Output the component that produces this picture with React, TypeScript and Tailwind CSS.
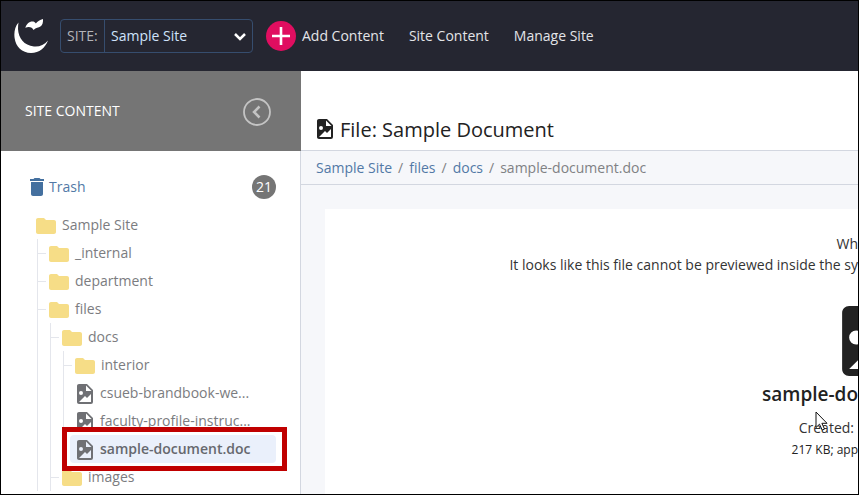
import type { ReactNode } from "react";

const navLinks = ["Site Content", "Manage Site"];

const crumbs = ["Sample Site", "files", "docs"];

function FileIcon({ className, viewBox = "4 2 16 20" }: { className?: string; viewBox?: string }) {
  return (
    <svg viewBox={viewBox} className={className} fill="currentColor" aria-hidden="true">
      <path d="M13,9H18.5L13,3.5V9M6,2H14L20,8V20A2,2 0 0,1 18,22H6C4.89,22 4,21.1 4,20V4C4,2.89 4.89,2 6,2M6,20H15L18,20V12L14,16L12,14L6,20M8,9A2,2 0 0,0 6,11A2,2 0 0,0 8,13A2,2 0 0,0 10,11A2,2 0 0,0 8,9Z" />
    </svg>
  );
}

function FolderIcon() {
  return (
    <svg viewBox="2 4 20 16" className="mt-px h-4 w-5 shrink-0 text-[#f6dd87]" fill="currentColor" aria-hidden="true">
      <path d="M10 4H4c-1.1 0-2 .9-2 2v12c0 1.1.9 2 2 2h16c1.1 0 2-.9 2-2V8c0-1.1-.9-2-2-2h-8l-2-2z" />
    </svg>
  );
}

function Logo() {
  return (
    <svg viewBox="0 0 34 34" className="h-[34px] w-[34px] shrink-0" fill="#fff" aria-hidden="true">
      <path d="M4.500 3.500C1 7.500-.2 13 .6 19c1 8.500 7.500 15 16.400 15 8.500 0 14-5 17-12.500-4 4.500-8.500 6.500-14 6C10 26.500 4.500 19 4 10c0-2.500.2-4.500.5-6.500z" />
      <path d="M11.300 8.700c1.200-4 4.200-6.700 8-6.200 1 .2 1.900.9 2.500 1.900C23.500 2.400 26 .8 29 0c.2 3.200-.4 6-2.600 7.600-1.900 1.200-4.400 1-6.900 3.400-1.200-2.600-4-3.700-8.200-2.300z" />
    </svg>
  );
}

// A folder row; its children hang off a vertical guide line
function Folder({ name, root, children }: { name: string; root?: boolean; children?: ReactNode }) {
  return (
    <li>
      <a href="#" className="flex h-7 items-center">
        {!root && <span className="mr-[3px] h-px w-2 bg-[#e4e6ec]" />}
        <FolderIcon />
        <span className="ml-[6px]">{name}</span>
      </a>
      {children && (
        <ul className={root ? "ml-px border-l border-[#e4e6ec]" : "ml-3 border-l border-[#e4e6ec]"}>
          {children}
        </ul>
      )}
    </li>
  );
}

function File({ name, selected }: { name: string; selected?: boolean }) {
  return (
    <li className="relative">
      <a
        href="#"
        className={
          selected
            ? "ml-[6px] mr-6 flex h-7 items-center rounded bg-[#eaf0fb] pl-[7px] font-semibold text-[#66686e]"
            : "ml-[6px] mr-6 flex h-7 items-center pl-[7px]"
        }
      >
        <FileIcon className="mt-[2px] h-5 w-4 shrink-0 text-[#6f7074]" />
        <span className="ml-[7px] whitespace-nowrap">{name}</span>
      </a>
      {selected && (
        <span className="pointer-events-none absolute -left-[2px] -top-2 right-[13px] z-10 h-11 border-[5px] border-[#c00000]" />
      )}
    </li>
  );
}

function Header() {
  return (
    <header className="flex h-[70px] shrink-0 items-center bg-[#252631] pl-[13px] text-sm text-[#e3e4e8]">
      <Logo />
      <div className="ml-3 flex h-[34px] w-[193px] items-center rounded-sm border border-[#364d6e]">
        <label htmlFor="site" className="flex h-full w-11 shrink-0 items-center border-r border-[#364d6e] pl-[6px] text-[#b4b4b8]">
          SITE:
        </label>
        <div className="relative flex-1">
          <select id="site" className="w-full appearance-none bg-transparent pl-[6px] text-[#cfe3fb] outline-none">
            <option>Sample Site</option>
          </select>
          <svg viewBox="0 0 12 8" className="pointer-events-none absolute right-[6px] top-[7px] h-2 w-3" fill="none" stroke="#fff" strokeWidth="2.500" aria-hidden="true">
            <path d="M1 1l5 5 5-5" />
          </svg>
        </div>
      </div>
      <nav className="flex items-center">
        <a href="#" className="ml-[13px] flex items-center">
          <svg viewBox="0 0 30 30" className="mr-[6px] h-[30px] w-[30px]" aria-hidden="true">
            <circle cx="15" cy="15" r="15" fill="#e00e60" />
            <path d="M6 15h18M15 6v18" stroke="#fff" strokeWidth="2.600" />
          </svg>
          Add Content
        </a>
        {navLinks.map((link) => (
          <a key={link} href="#" className="ml-[25px]">
            {link}
          </a>
        ))}
      </nav>
    </header>
  );
}

function Sidebar() {
  return (
    <aside className="flex w-[300px] shrink-0 flex-col">
      <div className="flex h-20 items-center justify-between bg-[#757575] pl-6 pr-[30px]">
        <h2 className="text-sm text-white">SITE CONTENT</h2>
        <button type="button" aria-label="Collapse" className="text-[#c4c4c4]">
          <svg viewBox="0 0 28 28" className="mt-[2px] h-7 w-7" fill="none" stroke="currentColor" aria-hidden="true">
            <circle cx="14" cy="14" r="13" strokeWidth="1.800" />
            <path d="M16.500 8.500L11 14l5.500 5.500" strokeWidth="2.500" />
          </svg>
        </button>
      </div>
      <div className="flex-1 border-r border-[#d3d7e0] text-sm text-[#7b7c80]">
        <div className="flex items-center justify-between pl-[29px] pr-6 pt-6">
          <a href="#" className="flex items-center text-[#5279a6]">
            <svg viewBox="5 3 14 18" className="h-[18px] w-[14px] text-[#44709f]" fill="currentColor" aria-hidden="true">
              <path d="M6 19c0 1.100.9 2 2 2h8c1.100 0 2-.9 2-2V7H6v12zM19 4h-3.500l-1-1h-5l-1 1H5v2h14V4z" />
            </svg>
            <span className="ml-[5px]">Trash</span>
          </a>
          <span className="flex h-6 w-6 items-center justify-center rounded-full bg-[#757575] text-white">
            21
          </span>
        </div>
        <ul className="pl-[35px] pt-3">
          <Folder name="Sample Site" root>
            <Folder name="_internal" />
            <Folder name="department" />
            <Folder name="files">
              <Folder name="docs">
                <Folder name="interior" />
                <File name="csueb-brandbook-we..." />
                <File name="faculty-profile-instruc..." />
                <File name="sample-document.doc" selected />
              </Folder>
              <Folder name="images" />
            </Folder>
          </Folder>
        </ul>
      </div>
    </aside>
  );
}

function Preview() {
  return (
    <section className="relative flex flex-1 flex-col items-end overflow-hidden whitespace-nowrap bg-white pt-[21px] text-sm text-[#333]">
      <p className="leading-7">Wh</p>
      <p className="-mt-[7px] leading-7">It looks like this file cannot be previewed inside the sy</p>
      <FileIcon viewBox="4 2 4.500 20" className="mt-[27px] h-[70px] w-4 text-[#222]" />
      <h3 className="mt-1 text-[19px] font-semibold leading-7 text-[#222]">sample-do</h3>
      <p className="mt-2 pr-1 leading-6">Created:</p>
      <p className="text-xs leading-5 text-[#222]">217 KB; app</p>
      {/* Mouse pointer */}
      <svg viewBox="0 0 13 20" className="absolute right-[30px] top-[202px] h-5 w-[13px]" aria-hidden="true">
        <path d="M1 1v15.500l3.500-3.300 2.700 5.800 2.300-1-2.600-5.700H12z" fill="#fff" stroke="#111" />
      </svg>
    </section>
  );
}

export default function App() {
  return (
    <div className="flex min-h-screen flex-col border border-black bg-white font-['Open_Sans',sans-serif]">
      <Header />
      <div className="flex flex-1">
        <Sidebar />
        <main className="flex min-w-0 flex-1 flex-col bg-[#f6f7fa]">
          <div className="flex h-20 items-end border-b border-[#d3d7e0] bg-white pb-[7px] pl-4">
            <FileIcon className="mb-1 h-5 w-4 text-[#222]" />
            <h1 className="ml-[7px] text-xl leading-[26px] text-[#222]">File: Sample Document</h1>
          </div>
          <nav aria-label="Breadcrumb" className="flex h-[34px] items-center border-b border-[#d3d7e0] pl-[15px] text-sm text-[#808184]">
            {crumbs.map((crumb) => (
              <span key={crumb}>
                <a href="#" className="text-[#5279a6]">
                  {crumb}
                </a>
                <span className="mx-[6px]">/</span>
              </span>
            ))}
            <span>sample-document.doc</span>
          </nav>
          <div className="flex flex-1 flex-col pl-6 pt-6">
            <Preview />
          </div>
        </main>
      </div>
    </div>
  );
}
